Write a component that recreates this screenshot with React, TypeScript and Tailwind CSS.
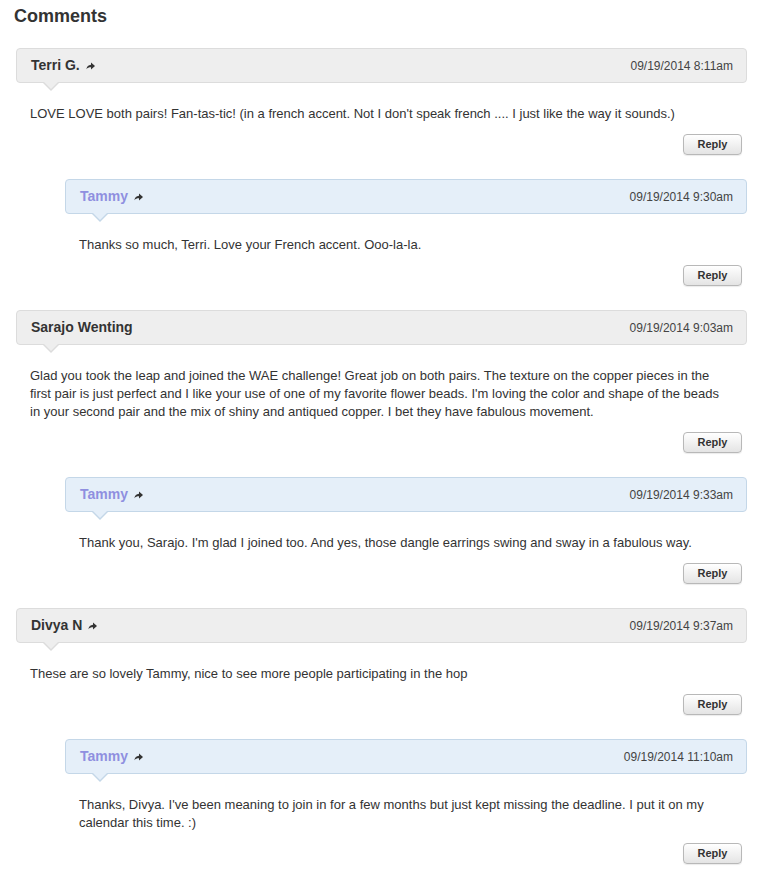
import React from 'react';

interface CommentData {
  author: string;
  date: string;
  body: string;
  link?: boolean;
  staff?: boolean;
  replies?: CommentData[];
}

const COMMENTS: CommentData[] = [
  {
    author: 'Terri G.', date: '09/19/2014 8:11am', link: true,
    body: "LOVE LOVE both pairs! Fan-tas-tic! (in a french accent. Not I don't speak french .... I just like the way it sounds.)",
    replies: [
      { author: 'Tammy', date: '09/19/2014 9:30am', link: true, staff: true,
        body: 'Thanks so much, Terri. Love your French accent. Ooo-la-la.' },
    ],
  },
  {
    author: 'Sarajo Wenting', date: '09/19/2014 9:03am',
    body: "Glad you took the leap and joined the WAE challenge! Great job on both pairs. The texture on the copper pieces in the first pair is just perfect and I like your use of one of my favorite flower beads. I'm loving the color and shape of the beads in your second pair and the mix of shiny and antiqued copper. I bet they have fabulous movement.",
    replies: [
      { author: 'Tammy', date: '09/19/2014 9:33am', link: true, staff: true,
        body: "Thank you, Sarajo. I'm glad I joined too. And yes, those dangle earrings swing and sway in a fabulous way." },
    ],
  },
  {
    author: 'Divya N', date: '09/19/2014 9:37am', link: true,
    body: 'These are so lovely Tammy, nice to see more people participating in the hop',
    replies: [
      { author: 'Tammy', date: '09/19/2014 11:10am', link: true, staff: true,
        body: "Thanks, Divya. I've been meaning to join in for a few months but just kept missing the deadline. I put it on my calendar this time. :)" },
    ],
  },
];

function LinkArrow() {
  return (
    <svg width="9" height="8" viewBox="0 0 9 8" className="ml-[6px] mt-[1px]">
      <path d="M5 0.5 L9 4 L5 7.5 L5 5.2 C3 5.2 1.5 5.8 0.3 7.2 C0.8 4.6 2.4 3 5 2.8 Z" fill="#333" />
    </svg>
  );
}

function Comment({ c, reply }: { c: CommentData; reply?: boolean }) {
  const head = reply ? 'bg-[#e5eff9] border-[#c4d7e8]' : 'bg-[#eeeeee] border-[#dcdcdc]';
  const tailBorder = reply ? 'border-t-[#c4d7e8]' : 'border-t-[#dcdcdc]';
  const tailFill = reply ? 'border-t-[#e5eff9]' : 'border-t-[#eeeeee]';
  return (
    <div className="mb-[24px]">
      <div className={`relative h-[35px] rounded-[4px] border ${head} flex items-center justify-between pl-[14px] pr-[13px]`}>
        <div className="flex items-center">
          <span className={`text-[14px] font-bold ${c.staff ? 'text-[#8f8fe0]' : 'text-[#333]'}`}>{c.author}</span>
          {c.link && <LinkArrow />}
        </div>
        <span className="text-[12px] text-[#444]">{c.date}</span>
        <span className={`absolute left-[25px] top-full w-0 h-0 border-x-[9px] border-x-transparent border-t-[9px] ${tailBorder}`} />
        <span className={`absolute left-[26px] top-full -mt-px w-0 h-0 border-x-[8px] border-x-transparent border-t-[8px] ${tailFill}`} />
      </div>
      <p className="mt-[22px] pl-[14px] pr-[24px] text-[13px] leading-[18px] text-[#333]">{c.body}</p>
      <div className="mt-[11px] flex justify-end pr-[5px]">
        <button className="w-[59px] h-[21px] rounded-[4px] border border-[#b8b8b8] bg-linear-to-b from-white to-[#e4e4e4] text-[11px] font-bold text-[#333] shadow-[0_1px_1px_rgba(0,0,0,0.08)]">
          Reply
        </button>
      </div>
    </div>
  );
}

export default function App() {
  return (
    <div className="w-[771px] min-h-[875px] bg-white pl-[16px] pr-[24px] pt-[6px] font-['Liberation_Sans',Arial,sans-serif]">
      <h2 className="-ml-[2px] text-[18px] leading-[20px] font-bold text-[#333] mb-[22px]">Comments</h2>
      {COMMENTS.map(c => (
        <div key={c.author + c.date}>
          <Comment c={c} />
          <div className="ml-[49px]">
            {c.replies?.map(r => <Comment key={r.date} c={r} reply />)}
          </div>
        </div>
      ))}
    </div>
  );
}
